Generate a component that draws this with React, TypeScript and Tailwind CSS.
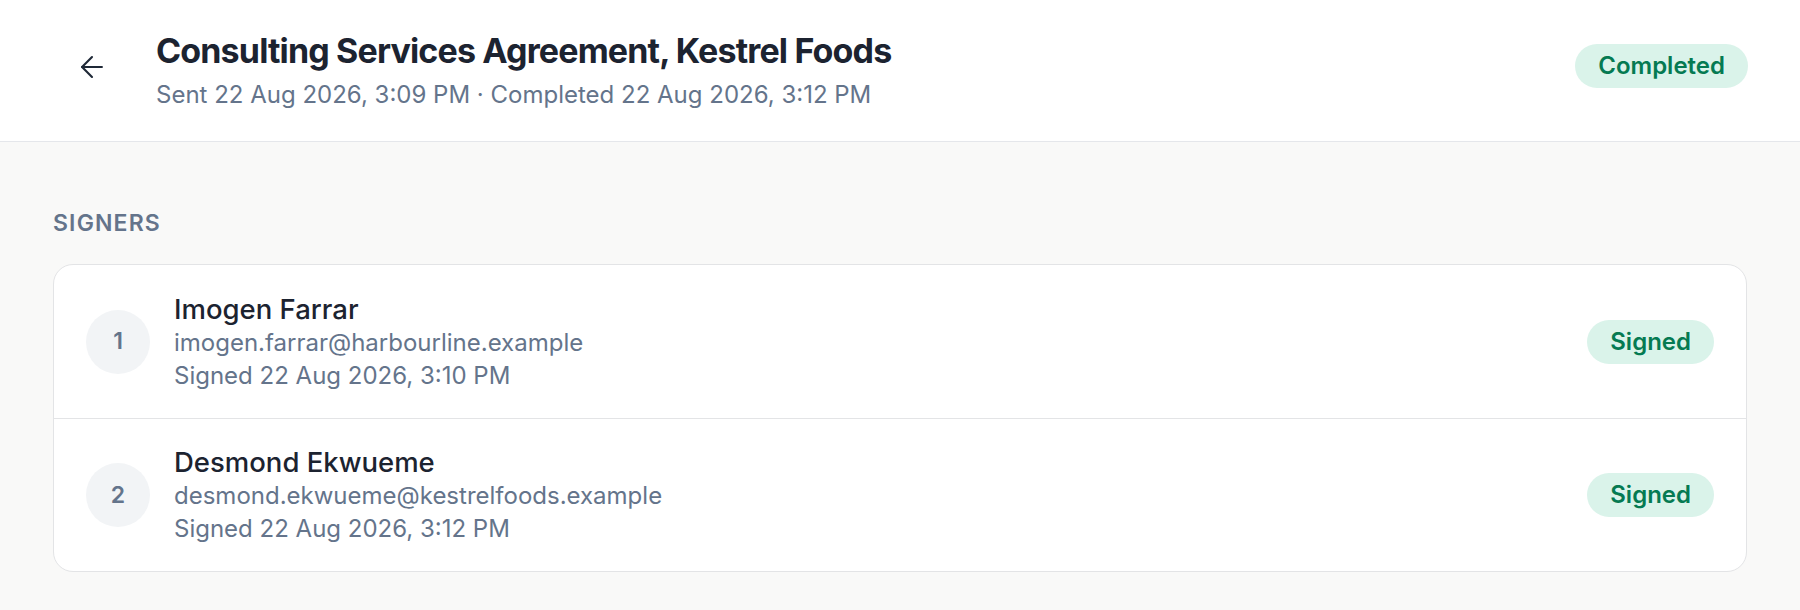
import { ArrowLeft } from "lucide-react";

const signers = [
  {
    order: 1,
    name: "Imogen Farrar",
    email: "imogen.farrar@harbourline.example",
    signedAt: "22 Aug 2026, 3:10 PM",
  },
  {
    order: 2,
    name: "Desmond Ekwueme",
    email: "desmond.ekwueme@kestrelfoods.example",
    signedAt: "22 Aug 2026, 3:12 PM",
  },
];

export default function App() {
  return (
    <div
      className="min-h-[610px] bg-[#f9f9f8]"
      style={{ fontFamily: "Inter, 'Noto Sans', sans-serif" }}
    >
      {/* Header */}
      <header className="flex items-center justify-between bg-white border-b border-[#e5e7eb] pl-[70px] pr-[52px] h-[142px]">
        <div className="flex items-center gap-[42px]">
          <button className="w-11 h-11 mb-[7px] flex items-center justify-center rounded-full text-[#1f2937]">
            <ArrowLeft size={34} strokeWidth={1.5} />
          </button>
          <div>
            <h1 className="text-[34px] leading-10 font-bold tracking-tight text-[#1c2330]">
              Consulting Services Agreement, Kestrel Foods
            </h1>
            <p className="mt-[8px] text-[24px] leading-8 text-[#64748b]">
              Sent 22 Aug 2026, 3:09 PM · Completed 22 Aug 2026, 3:12 PM
            </p>
          </div>
        </div>
        <span className="inline-flex items-center h-11 mb-[10px] px-[23px] rounded-full bg-[#daf3ea] text-[#057a52] text-[24px] font-semibold">
          Completed
        </span>
      </header>

      {/* Signers */}
      <main className="px-[53px] pt-[67px] pb-[39px]">
        <h2 className="text-[23px] leading-7 font-semibold tracking-wider uppercase text-[#64748b]">
          Signers
        </h2>
        <div className="mt-[27px] bg-white border border-[#e3e4e6] rounded-[20px]">
          {signers.map((s, idx) => (
            <div
              key={s.order}
              className={
                "flex items-center justify-between px-[32px] h-[153px]" +
                (idx > 0 ? " border-t border-[#e3e4e6]" : "")
              }
            >
              <div className="flex items-center gap-[24px]">
                <div className="w-16 h-16 rounded-full bg-[#f2f4f6] flex items-center justify-center text-[23px] font-semibold text-[#64748b]">
                  {s.order}
                </div>
                <div>
                  <div className="text-[27.5px] leading-[34px] font-medium text-[#1c2330]">{s.name}</div>
                  <div className="text-[24px] leading-[34px] text-[#64748b]">{s.email}</div>
                  <div className="text-[24px] leading-[32px] text-[#64748b]">Signed {s.signedAt}</div>
                </div>
              </div>
              <span className="inline-flex items-center h-11 px-[23px] rounded-full bg-[#daf3ea] text-[#057a52] text-[24px] font-semibold">
                Signed
              </span>
            </div>
          ))}
        </div>
      </main>
    </div>
  );
}
